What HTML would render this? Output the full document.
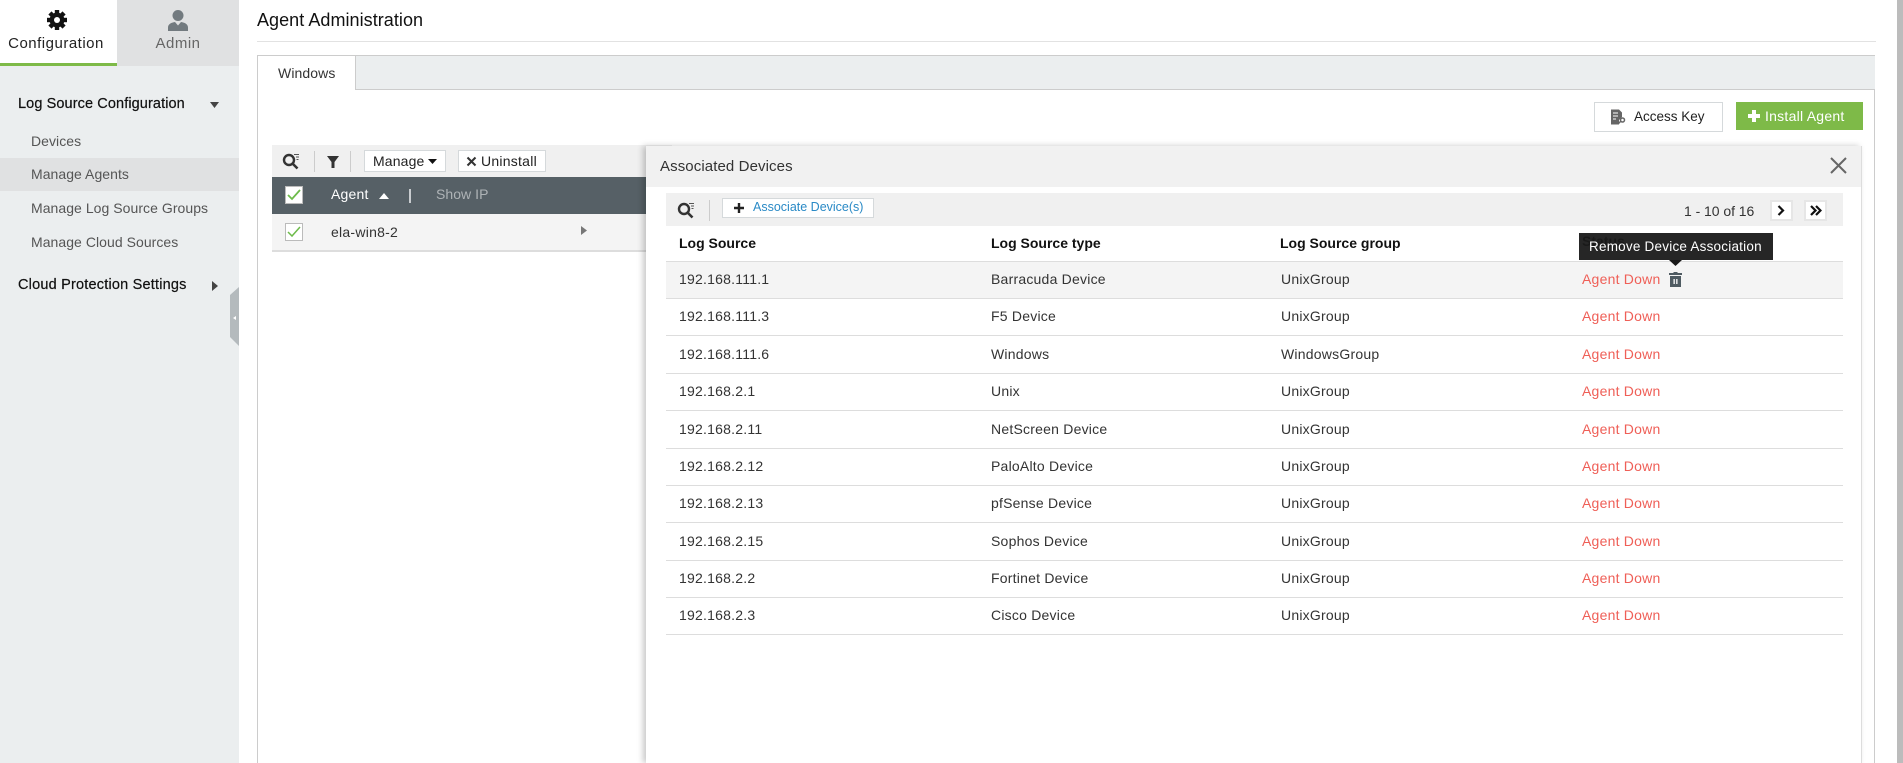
<!DOCTYPE html>
<html lang="en">
<head>
<meta charset="utf-8">
<title>Agent Administration</title>
<style>
html,body{margin:0;padding:0;width:1903px;height:763px;overflow:hidden;background:#fff}
body{font-family:"Liberation Sans",Arial,sans-serif;font-size:14px;color:#333;position:relative}
.a{position:absolute;white-space:nowrap}
.t{position:absolute;white-space:nowrap;line-height:20px;height:20px}
svg{position:absolute;display:block}
.side{left:0;top:0;width:239px;height:763px;background:#ebeeef}
.sub{color:#555;font-size:14px;letter-spacing:.05px;left:31px}
.hd{font-size:14.5px;color:#111;left:18px;letter-spacing:.1px;-webkit-text-stroke:.2px #111}
.row{position:absolute;left:666px;width:1177px;border-bottom:1px solid #ddd;box-sizing:border-box}
.row span{position:absolute;top:50%;margin-top:-11px;line-height:20px;white-space:nowrap;letter-spacing:.22px}
.c1{left:13px}.c2{left:325px}.c3{left:615px}.c4{left:916px;color:#ef5f57}
.btn{position:absolute;background:#fff;border:1px solid #d5d9db;box-sizing:border-box}
.th{font-weight:bold;color:#111;letter-spacing:0}
</style>
</head>
<body>
<div class="a side"></div>
<div class="a" style="left:0;top:0;width:117px;height:63px;background:#fff;border-bottom:3px solid #7eba48"></div>
<div class="a" style="left:117px;top:0;width:122px;height:66px;background:#e0e1e2"></div>
<svg style="left:47px;top:10px" width="20" height="20" viewBox="-10 -10 20 20"><g fill="#111"><rect x="-2.2" y="-10" width="4.4" height="20"/><rect x="-2.2" y="-10" width="4.4" height="20" transform="rotate(45)"/><rect x="-2.2" y="-10" width="4.4" height="20" transform="rotate(90)"/><rect x="-2.2" y="-10" width="4.4" height="20" transform="rotate(135)"/><circle r="7.4"/></g><circle r="3" fill="#fff"/></svg>
<svg style="left:167px;top:9px" width="22" height="23" viewBox="0 0 22 23"><circle cx="11" cy="6.5" r="5.5" fill="#727a7f"/><path d="M1 22v-3.500C1 15 4.500 13.500 8 13l3 3.500L14 13c3.500.5 7 2 7 5.500V22z" fill="#727a7f"/></svg>
<div class="t" style="left:6px;top:34px;width:100px;text-align:center;font-size:15px;color:#222;letter-spacing:.5px">Configuration</div>
<div class="t" style="left:127px;top:34px;width:102px;text-align:center;font-size:15px;color:#666;letter-spacing:.5px">Admin</div>

<div class="t hd" style="top:94px">Log Source Configuration</div>
<svg style="left:210px;top:102px" width="9" height="6"><path d="M0 0h9L4.500 6z" fill="#444"/></svg>
<div class="t sub" style="top:131px">Devices</div>
<div class="a" style="left:0;top:158px;width:239px;height:33px;background:#e0e1e2"></div>
<div class="t sub" style="top:164px">Manage Agents</div>
<div class="t sub" style="top:198px">Manage Log Source Groups</div>
<div class="t sub" style="top:232px">Manage Cloud Sources</div>
<div class="t hd" style="top:275px;letter-spacing:.2px">Cloud Protection Settings</div>
<svg style="left:212px;top:281px" width="6" height="10"><path d="M0 0v10l6-5z" fill="#444"/></svg>
<svg style="left:230px;top:287px" width="9" height="60"><path d="M9 0L0 8v42l9 9z" fill="#b4babd"/><path d="M6 29v4l-3-2z" fill="#fff"/></svg>

<div class="t" style="left:257px;top:10px;font-size:18px;line-height:20px;height:20px;color:#111;letter-spacing:.05px">Agent Administration</div>
<div class="a" style="left:257px;top:41px;width:1619px;height:1px;background:#e2e2e2"></div>

<div class="a" style="left:257px;top:55px;width:1618px;height:708px;border:1px solid #ccc;border-bottom:0;box-sizing:border-box"></div>
<div class="a" style="left:258px;top:56px;width:1617px;height:33px;background:#ebeeef;border-bottom:1px solid #ccc"></div>
<div class="a" style="left:258px;top:56px;width:98px;height:34px;background:#fff;border-right:1px solid #ccc;box-sizing:border-box"></div>
<div class="t" style="left:278px;top:63px;letter-spacing:.1px">Windows</div>

<div class="btn" style="left:1594px;top:102px;width:129px;height:30px"></div>
<svg style="left:1610px;top:109px" width="16" height="17" viewBox="0 0 16 17"><path d="M1 .5h8l3 3V8l-3 3v4.500H1z" fill="#666"/><path d="M3 4h5M3 7h5M3 10h3" stroke="#fff" stroke-width="1"/><circle cx="12.500" cy="11" r="2" fill="none" stroke="#666" stroke-width="1.500"/><path d="M11 12l-3 3" stroke="#666" stroke-width="1.500"/></svg>
<div class="t" style="left:1634px;top:107px;color:#222;font-size:13.5px;letter-spacing:0">Access Key</div>
<div class="a" style="left:1736px;top:102px;width:127px;height:28px;background:#7eba48"></div>
<svg style="left:1748px;top:110px" width="12" height="12"><path d="M4 0h4v4h4v4H8v4H4V8H0V4h4z" fill="#fff"/></svg>
<div class="t" style="left:1765px;top:106px;color:#fff;letter-spacing:.25px">Install Agent</div>

<!-- background grid -->
<div class="a" style="left:272px;top:145px;width:400px;height:32px;background:#f0f0f0"></div>
<svg style="left:282px;top:153px" width="18" height="17" viewBox="0 0 18 17"><circle cx="7" cy="7" r="5" fill="none" stroke="#333" stroke-width="2.400"/><path d="M10.500 10.500L15.500 15.500" stroke="#333" stroke-width="2.600"/><path d="M12 1.500h5M14 4h3M14.500 6.500h2" stroke="#555" stroke-width="1"/></svg>
<div class="a" style="left:314px;top:151px;width:1px;height:21px;background:#ccc"></div>
<svg style="left:327px;top:156px" width="12" height="12"><path d="M0 0h12L7.500 6v6h-3V6z" fill="#333"/></svg>
<div class="a" style="left:350px;top:151px;width:1px;height:21px;background:#ccc"></div>
<div class="btn" style="left:364px;top:150px;width:82px;height:22px"></div>
<div class="t" style="left:373px;top:151px;color:#222;letter-spacing:.15px">Manage</div>
<svg style="left:428px;top:159px" width="9" height="5"><path d="M0 0h9L4.500 5z" fill="#111"/></svg>
<div class="btn" style="left:458px;top:150px;width:88px;height:22px"></div>
<svg style="left:466px;top:156px" width="11" height="11"><path d="M1.500 1.500l8 8M9.500 1.500l-8 8" stroke="#333" stroke-width="2"/></svg>
<div class="t" style="left:481px;top:151px;color:#222;letter-spacing:.25px">Uninstall</div>

<div class="a" style="left:272px;top:177px;width:400px;height:37px;background:#566066"></div>
<div class="a" style="left:285px;top:186px;width:18px;height:18px;background:#fff;border:1px solid #bbb;box-sizing:border-box"></div>
<svg style="left:287px;top:189px" width="14" height="12"><path d="M1 6l4 4 8-9" fill="none" stroke="#6dbb4a" stroke-width="1.800"/></svg>
<div class="t" style="left:331px;top:184px;color:#fff;letter-spacing:.2px">Agent</div>
<svg style="left:379px;top:193px" width="10" height="6"><path d="M0 6h10L5 0z" fill="#fff"/></svg>
<div class="a" style="left:409px;top:189px;width:2px;height:14px;background:#c8cccf"></div>
<div class="t" style="left:436px;top:184px;color:#aeb3b6;letter-spacing:.05px">Show IP</div>
<div class="a" style="left:272px;top:214px;width:400px;height:36px;background:#f4f4f4;border-bottom:2px solid #ddd"></div>
<div class="a" style="left:285px;top:223px;width:18px;height:18px;background:#fff;border:1px solid #bbb;box-sizing:border-box"></div>
<svg style="left:287px;top:226px" width="14" height="12"><path d="M1 6l4 4 8-9" fill="none" stroke="#6dbb4a" stroke-width="1.500"/></svg>
<div class="t" style="left:331px;top:222px;letter-spacing:.25px">ela-win8-2</div>
<svg style="left:581px;top:226px" width="6" height="9"><path d="M0 0v9l6-4.500z" fill="#777"/></svg>

<!-- dialog -->
<div class="a" style="left:646px;top:146px;width:1216px;height:617px;background:#fff;box-shadow:-3px 0 6px rgba(0,0,0,.22);border-right:1px solid #ddd;box-sizing:border-box"></div>
<div class="a" style="left:646px;top:146px;width:1215px;height:41px;background:#f1f1f1"></div>
<div class="t" style="left:660px;top:157px;font-size:15px;color:#333;letter-spacing:.1px">Associated Devices</div>
<svg style="left:1830px;top:157px" width="17" height="17"><path d="M1 1l15 15M16 1L1 16" stroke="#666" stroke-width="2"/></svg>

<div class="a" style="left:666px;top:193px;width:1177px;height:33px;background:#f0f0f0"></div>
<svg style="left:677px;top:202px" width="18" height="17" viewBox="0 0 18 17"><circle cx="7" cy="7" r="5" fill="none" stroke="#333" stroke-width="2.400"/><path d="M10.500 10.500L15.500 15.500" stroke="#333" stroke-width="2.600"/><path d="M12 1.500h5M14 4h3M14.500 6.500h2" stroke="#555" stroke-width="1"/></svg>
<div class="a" style="left:709px;top:200px;width:1px;height:21px;background:#ccc"></div>
<div class="btn" style="left:722px;top:198px;width:152px;height:20px"></div>
<svg style="left:734px;top:203px" width="10" height="10"><path d="M3.800 0h2.400v3.800H10v2.400H6.200V10H3.800V6.200H0V3.800h3.800z" fill="#222"/></svg>
<div class="t" style="left:753px;top:197px;color:#2a8ac6;font-size:12.5px;letter-spacing:0">Associate Device(s)</div>
<div class="t" style="left:1684px;top:201px;color:#333;letter-spacing:-.05px">1 - 10 of 16</div>
<div class="btn" style="left:1770px;top:200px;width:23px;height:21px;border-width:2px;border-color:#e6e6e6"></div>
<svg style="left:1777px;top:205px" width="8" height="11"><path d="M1.500 1l4.500 4.500L1.500 10" fill="none" stroke="#111" stroke-width="2.200"/></svg>
<div class="btn" style="left:1804px;top:200px;width:23px;height:21px;border-width:2px;border-color:#e6e6e6"></div>
<svg style="left:1810px;top:205px" width="12" height="11"><path d="M1 1l4.500 4.500L1 10M6 1l4.500 4.500L6 10" fill="none" stroke="#111" stroke-width="2.200"/></svg>

<div class="t th" style="left:679px;top:233px">Log Source</div>
<div class="t th" style="left:991px;top:233px">Log Source type</div>
<div class="t th" style="left:1280px;top:233px">Log Source group</div>
<div class="t th" style="left:1582px;top:231px">Status</div>
<div class="a" style="left:666px;top:261px;width:1177px;height:1px;background:#ddd"></div>

<div class="row" style="top:262px;height:37px;background:#f4f4f4"><span class="c1">192.168.111.1</span><span class="c2">Barracuda Device</span><span class="c3">UnixGroup</span><span class="c4">Agent Down</span></div>
<div class="row" style="top:299px;height:37px"><span class="c1">192.168.111.3</span><span class="c2">F5 Device</span><span class="c3">UnixGroup</span><span class="c4">Agent Down</span></div>
<div class="row" style="top:336px;height:38px"><span class="c1">192.168.111.6</span><span class="c2">Windows</span><span class="c3">WindowsGroup</span><span class="c4">Agent Down</span></div>
<div class="row" style="top:374px;height:37px"><span class="c1">192.168.2.1</span><span class="c2">Unix</span><span class="c3">UnixGroup</span><span class="c4">Agent Down</span></div>
<div class="row" style="top:411px;height:38px"><span class="c1">192.168.2.11</span><span class="c2">NetScreen Device</span><span class="c3">UnixGroup</span><span class="c4">Agent Down</span></div>
<div class="row" style="top:449px;height:37px"><span class="c1">192.168.2.12</span><span class="c2">PaloAlto Device</span><span class="c3">UnixGroup</span><span class="c4">Agent Down</span></div>
<div class="row" style="top:486px;height:37px"><span class="c1">192.168.2.13</span><span class="c2">pfSense Device</span><span class="c3">UnixGroup</span><span class="c4">Agent Down</span></div>
<div class="row" style="top:523px;height:38px"><span class="c1">192.168.2.15</span><span class="c2">Sophos Device</span><span class="c3">UnixGroup</span><span class="c4">Agent Down</span></div>
<div class="row" style="top:561px;height:37px"><span class="c1">192.168.2.2</span><span class="c2">Fortinet Device</span><span class="c3">UnixGroup</span><span class="c4">Agent Down</span></div>
<div class="row" style="top:598px;height:37px"><span class="c1">192.168.2.3</span><span class="c2">Cisco Device</span><span class="c3">UnixGroup</span><span class="c4">Agent Down</span></div>

<svg style="left:1669px;top:272px" width="13" height="15" viewBox="0 0 13 15"><path d="M4.500 1V0h4v1H13v2H0V1z" fill="#4f5b62"/><path d="M1 4h11v11H1z" fill="#4f5b62"/><path d="M4.500 7h1.300v5H4.500zM7.200 7h1.300v5H7.200z" fill="#fff"/></svg>

<div class="a" style="left:1579px;top:233px;width:194px;height:27px;background:rgba(26,26,26,.95)"></div>
<svg style="left:1669px;top:260px" width="13" height="6"><path d="M0 0h13L6.500 6z" fill="#181818"/></svg>
<div class="t" style="left:1589px;top:237px;color:#fff;font-size:13.5px;letter-spacing:.22px">Remove Device Association</div>

<div class="a" style="left:1897px;top:0;width:6px;height:763px;background:#bcbcbc"></div>
</body>
</html>
